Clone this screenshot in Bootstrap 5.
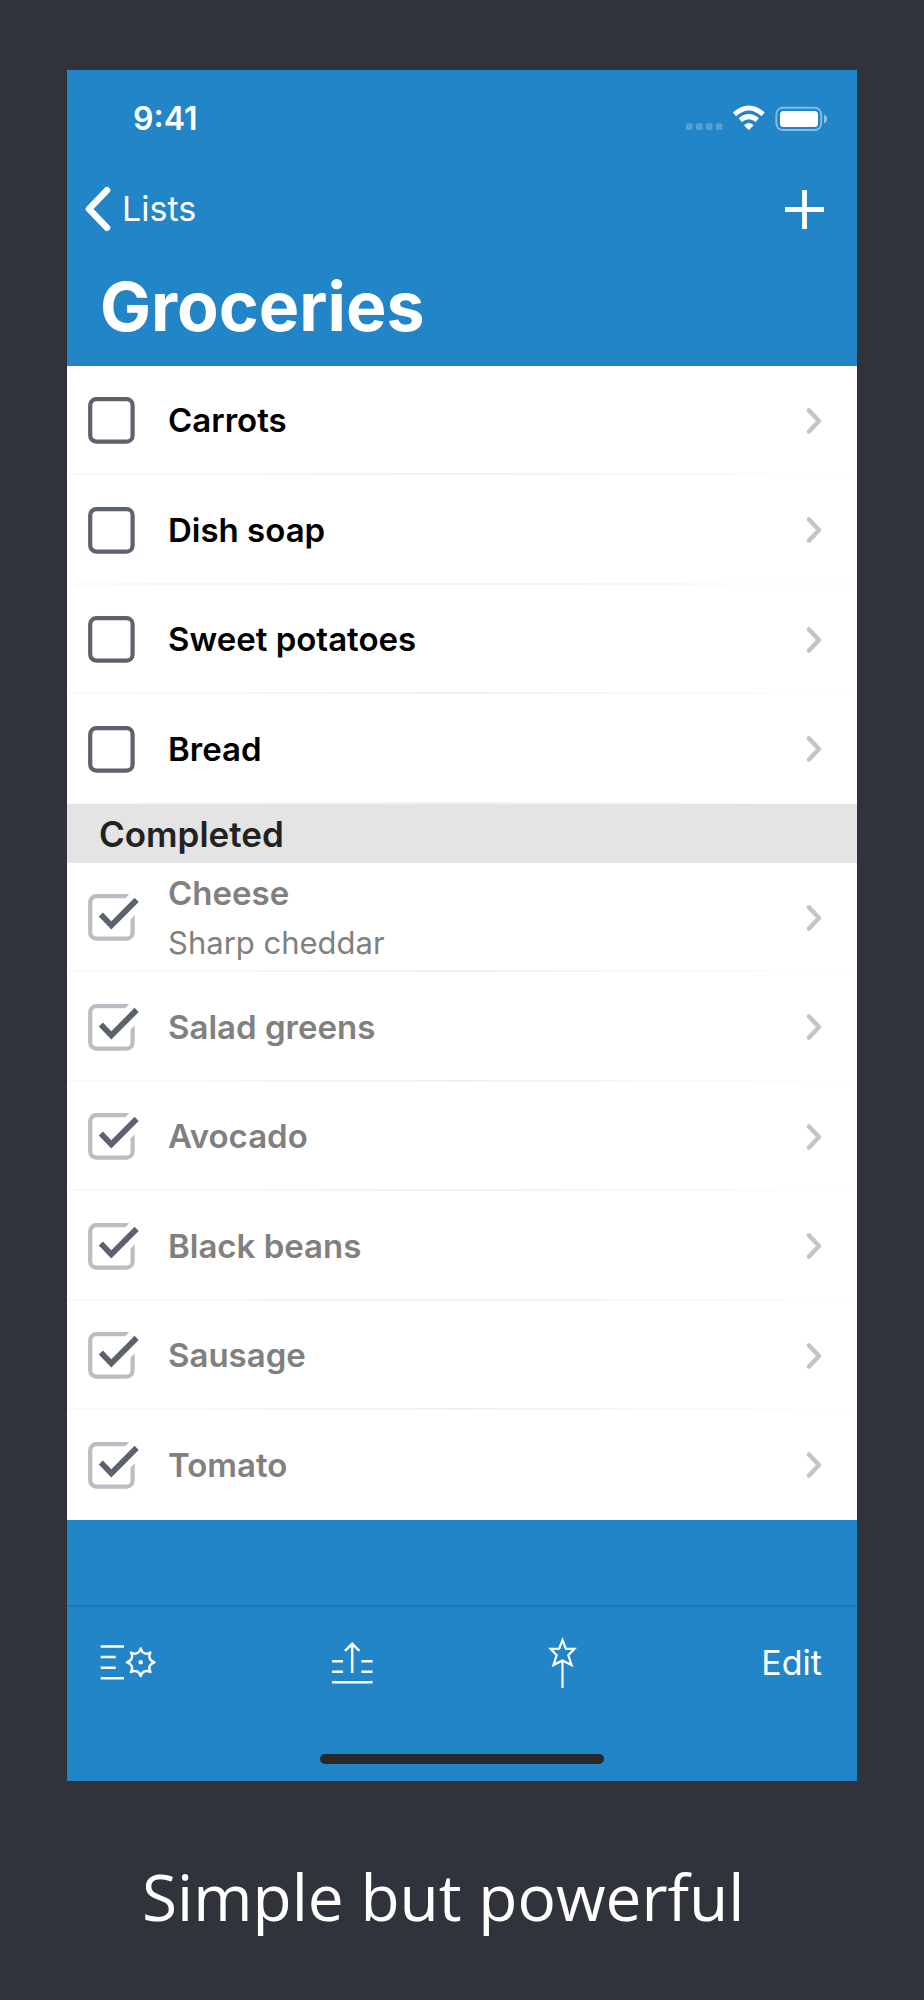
<!DOCTYPE html>
<html lang="en">
<head>
<meta charset="utf-8">
<meta name="viewport" content="width=device-width, initial-scale=1">
<title>Groceries</title>
<link href="https://cdn.jsdelivr.net/npm/bootstrap@5.3.0/dist/css/bootstrap.min.css" rel="stylesheet">
<style>
  :root { --app-blue: #2285c7; --app-dark: #31333c; }
  body { background: var(--app-dark); font-family: Inter, "Liberation Sans", sans-serif; }
  .stage { padding: 70px 67px 0; }
  .app-blue { background: var(--app-blue); color: #fff; }

  .status-bar { height: 98px; padding: 0 29px 0 66px; font-size: 32px; font-weight: 600; line-height: 40px; }
  .nav-row { height: 82px; padding: 0 33px 0 17px; }
  .plain-btn { background: none; border: 0; padding: 0; color: #fff; font-size: 34px; line-height: 44px; text-decoration: none; }
  .plain-btn svg, .more svg { display: block; }
  .back-text { margin-left: 11px; }
  .page-title { font-size: 68px; font-weight: 700; line-height: 84px; padding: 14px 33px 18px; margin: 0; }

  .item { height: 109px; padding: 0 35px 0 21px; border: 0; background: #fff; color: #000; position: relative; }
  .item:nth-child(even) { height: 110px; }
  .item::after { content: ""; position: absolute; left: 0; right: 0; bottom: 0; height: 2px;
    background: linear-gradient(90deg, #fafafa, #f1f1f1 50%, #fdfdfd 95%); }
  .item label { font-size: 33px; font-weight: 600; line-height: 49px; margin-left: 28px; }
  .item small { font-size: 31px; font-weight: 400; line-height: 49px; }
  .done .item { color: #808080; }
  .done .item:last-child::after { display: none; }
  .tick { appearance: none; width: 52px; height: 47px; margin: 0; flex: none;
    background: url("data:image/svg+xml,%3Csvg xmlns='http://www.w3.org/2000/svg' viewBox='0 0 52 47'%3E%3Crect x='2.2' y='2.2' width='42.4' height='42.4' rx='6' fill='none' stroke='%235c626e' stroke-width='4.2'/%3E%3C/svg%3E") no-repeat; }
  .tick:checked { background-image: url("data:image/svg+xml,%3Csvg xmlns='http://www.w3.org/2000/svg' viewBox='0 0 52 47'%3E%3Crect x='2.2' y='2.2' width='42.4' height='42.4' rx='6' fill='none' stroke='%23bbbdc4' stroke-width='4.2'/%3E%3Cpath d='M41.5 0L37 4.5V10L41 27L47.5 20.5V0Z' fill='%23fff'/%3E%3Cpath d='M10.800 22.500L14.900 18.400L23.300 27.200L46.600 3.800L50.700 8L23.300 35.600Z' fill='%235c626e'/%3E%3C/svg%3E"); }

  .section-head { background: #e4e4e4; color: #222; font-size: 35px; font-weight: 600; line-height: 58px; padding: 1px 32px 0; margin: 0; }
  .spacer { height: 85px; }
  .toolbar-row { height: 114px; border-top: 2px solid #1f76b1; padding: 0 35px 0 33px; }
  .edit-btn { width: 68px; text-align: right; }
  .home { padding: 35px 0 17px; }
  .home-bar { width: 36%; height: 10px; background: #282828; }
  .caption { font-family: "Open Sans", sans-serif; font-weight: 400; font-size: 64px; line-height: 90px; color: #fff; padding: 71px 0 0 75px; margin: 0; }
</style>
</head>
<body>
<svg class="d-none" aria-hidden="true">
  <symbol id="chev" viewBox="0 0 16 28"><path d="M3 3.5L13 14L3 24.500" fill="none" stroke="#c4c4c6" stroke-width="4.500" stroke-linecap="round" stroke-linejoin="round"/></symbol>
</svg>
<main class="container-fluid stage">
  <div class="phone">
    <header class="app-blue">
      <div class="status-bar d-flex align-items-center justify-content-between">
        <span>9:41</span>
        <svg width="142" height="28" viewBox="0 0 142 28" fill="#fff" role="img" aria-label="Wi-Fi on, battery full">
          <g opacity=".22"><rect y="18.300" width="6.700" height="6.700" rx="1.500"/><rect x="9.900" y="18.300" width="6.700" height="6.700" rx="1.500"/><rect x="19.800" y="18.300" width="6.700" height="6.700" rx="1.500"/><rect x="29.700" y="18.300" width="6.700" height="6.700" rx="1.500"/></g>
          <g fill="none" stroke="#fff" stroke-width="5"><path d="M48.500 9.300Q62.800-3.300 77.100 9.300"/><path d="M54.300 15.100Q62.800 8 71.300 15.100"/></g>
          <path d="M58 20.200Q62.800 15.800 67.600 20.200L63.500 24.500Q62.800 25.200 62.100 24.500Z"/>
          <rect x="90.300" y="2.700" width="44.900" height="22.300" rx="6.500" fill="none" stroke="#fff" stroke-width="1.900" opacity=".45"/>
          <rect x="94" y="5.900" width="38" height="16" rx="3.500"/>
          <path d="M138 9.500Q141 10.500 141 14T138 18.500Z" opacity=".5"/>
        </svg>
      </div>
      <nav class="nav-row d-flex align-items-center justify-content-between">
        <a href="#" class="plain-btn d-flex align-items-center">
          <svg width="27" height="46" viewBox="0 0 27 46" fill="none" stroke="#fff" stroke-width="6.600" stroke-linecap="round" stroke-linejoin="round"><path d="M23 4.300L5 23L23 41.700"/></svg>
          <span class="back-text">Lists</span>
        </a>
        <button type="button" class="plain-btn" aria-label="Add item">
          <svg width="39" height="39" viewBox="0 0 39 39" fill="none" stroke="#fff" stroke-width="4.800"><path d="M19.500 0V39M0 19.500H39"/></svg>
        </button>
      </nav>
      <h1 class="page-title">Groceries</h1>
    </header>

    <ul class="list-group list-group-flush rounded-0">
      <li class="list-group-item item d-flex align-items-center"><input class="tick" type="checkbox" id="i1"><label for="i1">Carrots</label><a href="#" class="more ms-auto" aria-label="Carrots details"><svg width="16" height="28"><use href="#chev"/></svg></a></li>
      <li class="list-group-item item d-flex align-items-center"><input class="tick" type="checkbox" id="i2"><label for="i2">Dish soap</label><a href="#" class="more ms-auto" aria-label="Dish soap details"><svg width="16" height="28"><use href="#chev"/></svg></a></li>
      <li class="list-group-item item d-flex align-items-center"><input class="tick" type="checkbox" id="i3"><label for="i3">Sweet potatoes</label><a href="#" class="more ms-auto" aria-label="Sweet potatoes details"><svg width="16" height="28"><use href="#chev"/></svg></a></li>
      <li class="list-group-item item d-flex align-items-center"><input class="tick" type="checkbox" id="i4"><label for="i4">Bread</label><a href="#" class="more ms-auto" aria-label="Bread details"><svg width="16" height="28"><use href="#chev"/></svg></a></li>
    </ul>

    <h2 class="section-head">Completed</h2>
    <ul class="list-group list-group-flush rounded-0 done">
      <li class="list-group-item item d-flex align-items-center"><input class="tick" type="checkbox" id="c1" checked><label for="c1">Cheese<small class="d-block">Sharp cheddar</small></label><a href="#" class="more ms-auto" aria-label="Cheese details"><svg width="16" height="28"><use href="#chev"/></svg></a></li>
      <li class="list-group-item item d-flex align-items-center"><input class="tick" type="checkbox" id="c2" checked><label for="c2">Salad greens</label><a href="#" class="more ms-auto" aria-label="Salad greens details"><svg width="16" height="28"><use href="#chev"/></svg></a></li>
      <li class="list-group-item item d-flex align-items-center"><input class="tick" type="checkbox" id="c3" checked><label for="c3">Avocado</label><a href="#" class="more ms-auto" aria-label="Avocado details"><svg width="16" height="28"><use href="#chev"/></svg></a></li>
      <li class="list-group-item item d-flex align-items-center"><input class="tick" type="checkbox" id="c4" checked><label for="c4">Black beans</label><a href="#" class="more ms-auto" aria-label="Black beans details"><svg width="16" height="28"><use href="#chev"/></svg></a></li>
      <li class="list-group-item item d-flex align-items-center"><input class="tick" type="checkbox" id="c5" checked><label for="c5">Sausage</label><a href="#" class="more ms-auto" aria-label="Sausage details"><svg width="16" height="28"><use href="#chev"/></svg></a></li>
      <li class="list-group-item item d-flex align-items-center"><input class="tick" type="checkbox" id="c6" checked><label for="c6">Tomato</label><a href="#" class="more ms-auto" aria-label="Tomato details"><svg width="16" height="28"><use href="#chev"/></svg></a></li>
    </ul>

    <footer class="app-blue">
      <div class="spacer"></div>
      <div class="toolbar-row d-flex align-items-center justify-content-between">
        <button type="button" class="plain-btn" aria-label="List settings">
          <svg width="56" height="36" viewBox="0 0 56 36" fill="none" stroke="#fff" stroke-width="2.400" stroke-linejoin="round">
            <path d="M.7 1.500H24M.7 12H15.700M.7 22.700H15.700M.7 33.300H24"/>
            <g transform="translate(40.700 17.300)">
              <path d="M13.800 0C8.940 1.420 7.320 5.320 9.760 9.760C5.320 7.320 1.420 8.940 0 13.800C-1.420 8.940-5.320 7.320-9.760 9.760C-7.320 5.320-8.940 1.420-13.800 0C-8.940-1.420-7.320-5.320-9.760-9.760C-5.320-7.320-1.420-8.940 0-13.800C1.420-8.940 5.320-7.320 9.760-9.760C7.320-5.320 8.940-1.420 13.800 0Z"/>
              <circle r="2.200" fill="#fff" stroke="none"/>
            </g>
          </svg>
        </button>
        <button type="button" class="plain-btn" aria-label="Share list">
          <svg width="41" height="42" viewBox="0 0 41 42" fill="none" stroke="#fff" stroke-width="2.500"><path d="M0 19.300H11M29.500 19.300H40.500M0 29.700H11M29.500 29.700H40.500M0 40.300H40.500M20.200 31V2M13 8.800L20.200 1.800L27.400 8.800"/></svg>
        </button>
        <button type="button" class="plain-btn" aria-label="Favorites">
          <svg width="30" height="52" viewBox="0 0 30 52" fill="none" stroke="#fff" stroke-width="2.200"><path d="M14.500 3L17.800 11.600L26.500 11.800L20.300 18.200L23.500 28L14.500 23.400L5.500 28L8.700 18.200L2.500 11.800L11.200 11.600ZM14.500 23V51"/></svg>
        </button>
        <button type="button" class="plain-btn edit-btn">Edit</button>
      </div>
      <div class="home"><div class="home-bar rounded-pill mx-auto"></div></div>
    </footer>
  </div>
  <p class="caption">Simple but powerful</p>
</main>
<script src="https://cdn.jsdelivr.net/npm/bootstrap@5.3.0/dist/js/bootstrap.bundle.min.js"></script>
</body>
</html>
